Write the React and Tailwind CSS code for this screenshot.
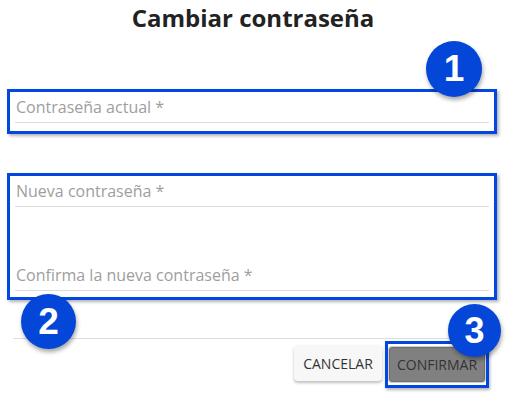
import React from "react";

function Field({ label, className = "" }) {
  return (
    <div className={"mx-[5px] " + className}>
      <div className="text-[16px] leading-[24px] text-[#9e9e9e] pl-[1px]">{label}</div>
      <div className="mt-[3px] h-px bg-[#dcdcdc]" />
    </div>
  );
}

function Badge({ n, className }) {
  return (
    <div
      className={
        "absolute rounded-full bg-[#0446d8] flex items-center justify-center text-white font-bold shadow-[1px_3px_4px_rgba(0,0,0,0.35)] " +
        className
      }
      style={{ fontFamily: '"Liberation Sans", Arial, sans-serif' }}
    >
      {n}
    </div>
  );
}

export default function App() {
  return (
    <div
      className="relative w-[506px] h-[404px] bg-white overflow-hidden text-[#222]"
      style={{ fontFamily: '"Open Sans", sans-serif' }}
    >
      <h1 className="pt-[2px] text-center text-[24px] leading-[32px] font-bold text-[#222]">
        Cambiar contraseña
      </h1>

      <div className="mt-[55px] ml-[7px] w-[490px] h-[45px] border-[3px] border-[#0446e0] shadow-[2px_2px_3px_rgba(0,0,0,0.3)] pt-[3px]">
        <Field label="Contraseña actual *" />
      </div>

      <div className="mt-[39px] ml-[7px] w-[490px] h-[127px] border-[3px] border-[#0446e0] shadow-[2px_2px_3px_rgba(0,0,0,0.3)] pt-[3px]">
        <Field label="Nueva contraseña *" />
        <Field label="Confirma la nueva contraseña *" className="mt-[56px]" />
      </div>

      <div className="mt-[38px] mx-[13px] h-px bg-[#dedede]" />

      <div className="flex justify-end items-start pr-[17px] mt-[2px]">
        <button className="mt-[4px] w-[88px] h-[36px] rounded-[4px] bg-[#f7f7f7] text-[14px] text-[#333] shadow-[0_2px_3px_rgba(0,0,0,0.25)]">
          CANCELAR
        </button>
        <div className="ml-[3px] w-[104px] h-[47px] border-[3px] border-[#0446e0] shadow-[1px_2px_3px_rgba(0,0,0,0.3)] p-[1px]">
          <button className="w-full h-[35px] mt-[2px] rounded-[3px] bg-[#808080] border border-[#6e6e6e] ring-1 ring-[#cfcfcf] text-[14px] text-[#333]">
            CONFIRMAR
          </button>
        </div>
      </div>

      <Badge n="1" className="left-[426px] top-[41px] w-[56px] h-[56px] text-[37px]" />
      <Badge n="2" className="left-[21px] top-[294px] w-[55px] h-[55px] text-[37px]" />
      <Badge n="3" className="left-[448px] top-[304px] w-[53px] h-[53px] text-[36px]" />
    </div>
  );
}
